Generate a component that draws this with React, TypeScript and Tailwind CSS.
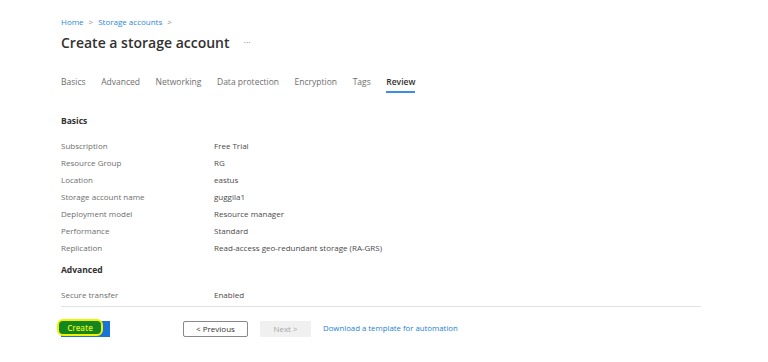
const rows: [string, string][] = [
  ["Subscription", "Free Trial"],
  ["Resource Group", "RG"],
  ["Location", "eastus"],
  ["Storage account name", "guggila1"],
  ["Deployment model", "Resource manager"],
  ["Performance", "Standard"],
  ["Replication", "Read-access geo-redundant storage (RA-GRS)"],
];

const tabs = ["Basics", "Advanced", "Networking", "Data protection", "Encryption", "Tags", "Review"];

function Row({ label, value }: { label: string; value: string }) {
  return (
    <div className="flex h-[17px] items-center text-[8px] leading-[17px]">
      <span className="w-[153px] text-[#6e6e6e]">{label}</span>
      <span className="text-[#4a4a4a]">{value}</span>
    </div>
  );
}

export default function App() {
  return (
    <div
      className="h-[362px] w-[768px] overflow-hidden bg-white pl-[61px] pt-[16px]"
      style={{ fontFamily: '"Open Sans", "Noto Sans", sans-serif' }}
    >
      <div className="w-[640px]">
        {/* breadcrumb */}
        <div className="flex h-[12px] items-center gap-[5px] text-[8px] leading-[12px] text-[#2b88d8]">
          <span>Home</span>
          <span className="text-[#8a8a8a]">&gt;</span>
          <span>Storage accounts</span>
          <span className="text-[#8a8a8a]">&gt;</span>
        </div>

        <div className="mt-[4px] flex h-[22px] items-center">
          <h1 className="text-[14px] font-semibold leading-[22px] text-[#323130]">Create a storage account</h1>
          <span className="ml-[14px] text-[9px] leading-[22px] text-[#8a8a8a]">···</span>
        </div>

        {/* tabs */}
        <div className="mt-[22px] flex gap-[15.6px] text-[8.5px] leading-[12px]">
          {tabs.map((t) => (
            <div
              key={t}
              className={
                t === "Review"
                  ? "border-b-2 border-[#3a8ee6] pb-[3px] font-semibold text-[#323130]"
                  : "border-b-2 border-transparent pb-[3px] text-[#6e6e6e]"
              }
            >
              {t}
            </div>
          ))}
        </div>

        <div className="mt-[22px] text-[8.5px] font-bold leading-[12px] text-[#323130]">Basics</div>
        <div className="mt-[10px]">
          {rows.map(([l, v]) => (
            <Row key={l} label={l} value={v} />
          ))}
        </div>

        <div className="mt-[8px] text-[8.5px] font-bold leading-[12px] text-[#323130]">Advanced</div>
        <div className="mt-[10px]">
          <Row label="Secure transfer" value="Enabled" />
        </div>

        <div className="mt-[3px] border-t border-[#e3e3e3]" />

        {/* actions */}
        <div className="mt-[14px] flex items-center text-[8px]">
          <div className="relative h-[16px] w-[49px] bg-[#1a73d6]">
            <div className="absolute left-[-4px] top-[-2px] flex h-[17px] w-[46px] items-center justify-center rounded-[6px] border-2 border-[#f2f200] bg-[#13861f]">
              <span className="font-semibold text-[#e6f20a]">Create</span>
            </div>
          </div>
          <button className="ml-[73px] h-[16px] w-[65px] rounded-[2px] border border-[#8a8886] bg-white text-[#323130]">
            &lt; Previous
          </button>
          <button className="ml-[12px] h-[16px] w-[51px] bg-[#f0f0f0] text-[#a6a6a6]">Next &gt;</button>
          <span className="ml-[12px] text-[7.8px] text-[#1b7fd6]">Download a template for automation</span>
        </div>
      </div>
    </div>
  );
}
